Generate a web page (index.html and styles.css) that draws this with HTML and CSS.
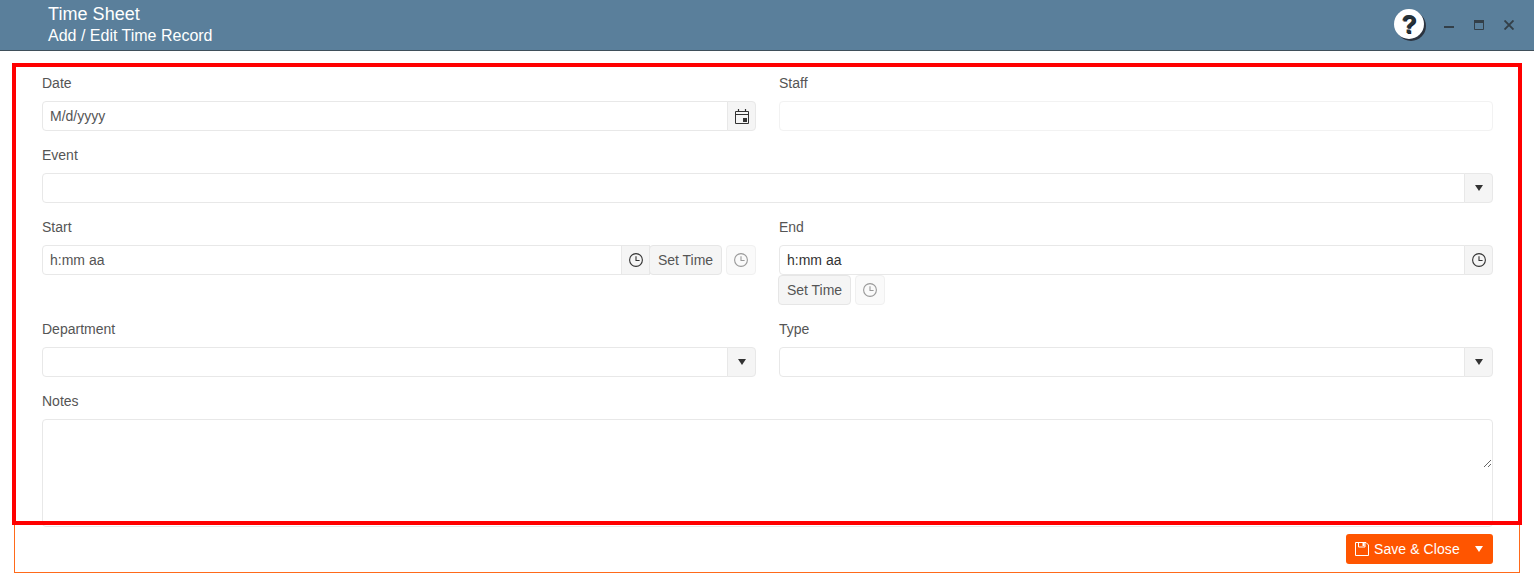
FILE: index.html
```html
<!DOCTYPE html>
<html lang="en">
<head>
<meta charset="utf-8">
<title>Time Sheet</title>
<link rel="stylesheet" href="styles.css">
</head>
<body>
<svg class="defs" width="0" height="0" aria-hidden="true">
  <symbol id="clock" viewBox="0 0 14 14">
    <circle cx="7" cy="7" r="6.4" fill="none" stroke="currentColor" stroke-width="1.1"/>
    <path d="M7 3.2V7.5H10.6" fill="none" stroke="currentColor" stroke-width="1.1"/>
  </symbol>
</svg>
<header class="titlebar">
  <div class="titles">
    <div class="title">Time Sheet</div>
    <div class="subtitle">Add / Edit Time Record</div>
  </div>
  <div class="controls">
    <span class="help">?</span>
    <svg class="ctl" viewBox="0 0 10 10"><path d="M0 7H10" stroke="currentColor" stroke-width="2"/></svg>
    <svg class="ctl" viewBox="0 0 10 10"><path d="M.5 .5H9.5V9.5H.5Z" fill="none" stroke="currentColor"/><path d="M0 1.5H10" stroke="currentColor" stroke-width="3"/></svg>
    <svg class="ctl" viewBox="0 0 10 10"><path d="M.5 .5L9.5 9.5M9.5 .5L.5 9.5" stroke="currentColor" stroke-width="1.9"/></svg>
  </div>
</header>

<main class="frame">
  <form class="form">
    <div class="field">
      <label class="label">Date</label>
      <div class="group">
        <div class="input">M/d/yyyy</div>
        <span class="addon"><svg class="icon-cal" viewBox="0 0 14 15"><path d="M.5 2.5H13.5V14.5H.5Z" fill="none" stroke="currentColor"/><path d="M.5 5.5H13.5" stroke="currentColor"/><path d="M3.5 0V3M10.5 0V3" stroke="currentColor" stroke-width="1.2"/><rect x="8" y="9" width="4" height="4" fill="currentColor"/></svg></span>
      </div>
    </div>
    <div class="field">
      <label class="label">Staff</label>
      <div class="input input-faint"></div>
    </div>
    <div class="field wide">
      <label class="label">Event</label>
      <div class="group">
        <div class="input"></div>
        <span class="addon"><span class="caret"></span></span>
      </div>
    </div>
    <div class="field">
      <label class="label">Start</label>
      <div class="group">
        <div class="input">h:mm aa</div>
        <span class="addon"><svg class="icon"><use href="#clock"/></svg></span>
        <button type="button" class="btn btn-set btn-overlap">Set Time</button>
        <button type="button" class="btn btn-ghost"><svg class="icon"><use href="#clock"/></svg></button>
      </div>
    </div>
    <div class="field">
      <label class="label">End</label>
      <div class="group group-wrap">
        <div class="group-line">
          <div class="input input-dark">h:mm aa</div>
          <span class="addon"><svg class="icon"><use href="#clock"/></svg></span>
        </div>
        <button type="button" class="btn btn-set btn-outdent">Set Time</button>
        <button type="button" class="btn btn-ghost"><svg class="icon"><use href="#clock"/></svg></button>
      </div>
    </div>
    <div class="field">
      <label class="label">Department</label>
      <div class="group">
        <div class="input"></div>
        <span class="addon"><span class="caret"></span></span>
      </div>
    </div>
    <div class="field">
      <label class="label">Type</label>
      <div class="group">
        <div class="input"></div>
        <span class="addon"><span class="caret"></span></span>
      </div>
    </div>
    <div class="field wide">
      <label class="label">Notes</label>
      <div class="notes"><textarea class="notes-area"></textarea></div>
    </div>
  </form>
  <footer class="footer">
    <div class="save">
      <svg class="save-icon" viewBox="0 0 14 14"><path d="M.5 .5H11L13.5 3V13.5H.5Z" fill="none" stroke="currentColor"/><path d="M3.5 .5V5H10V.5" fill="none" stroke="currentColor"/><rect x="7.5" y="1" width="2" height="3" fill="currentColor"/></svg>
      <span class="save-text">Save &amp; Close</span>
      <span class="save-caret"></span>
    </div>
  </footer>
</main>
<div class="highlight"></div>
</body>
</html>
```
FILE: styles.css
```css
* { box-sizing: border-box; }
html, body { margin: 0; padding: 0; background: #fff; }
body { font-family: "Liberation Sans", Arial, sans-serif; font-size: 14px; color: #555; height: 587px; overflow: hidden; position: relative; }
.defs { position: absolute; }

.titlebar { height: 51px; background: #5a7f9b; border-bottom: 1px solid #3f4f5a; padding: 4px 19px 0 48px; display: flex; justify-content: space-between; }
.title { font-size: 18px; line-height: 21px; color: #fff; letter-spacing: .05px; }
.subtitle { font-size: 16px; line-height: 21px; color: #fff; }
.controls { display: flex; align-items: flex-start; color: #333f48; padding-top: 5px; margin-right: 1px; }
.help { width: 30px; height: 30px; border-radius: 50%; background: #fff; color: #263238; font-size: 25px; font-weight: bold; line-height: 30px; text-align: center; box-shadow: 2px 2px 0 #2c3440; text-shadow: 1px 1px 0 #1b2430; }
.ctl { width: 10px; height: 10px; margin: 11px 0 0 20px; }

.frame { margin: 14px 14px 0; width: 1506px; height: 508px; border: 1px solid #ff6a1a; padding: 7px 26px 0 27px; }
.form { display: grid; grid-template-columns: 714px 714px; column-gap: 23px; row-gap: 14px; align-items: start; }
.field { min-width: 0; }
.wide { grid-column: 1 / -1; }
.label { display: block; line-height: 20px; margin-bottom: 8px; color: #555; }

.group { display: flex; }
.group-wrap { flex-wrap: wrap; }
.group-line { display: flex; width: 100%; }
.input { flex: 1; min-width: 0; height: 30px; line-height: 28px; padding: 0 7px; border: 1px solid #e8e8e8; border-radius: 4px 0 0 4px; background: #fff; color: #555; }
.input-faint { border-color: #f2f2f2; border-radius: 4px; }
.input-dark { color: #333; }
.addon { flex: none; width: 29px; height: 30px; margin-left: -1px; display: flex; align-items: center; justify-content: center; background: #f5f5f5; border: 1px solid #e8e8e8; border-radius: 0 4px 4px 0; color: #333; }
.group .addon:not(:last-child) { border-radius: 0; }
.icon { width: 14px; height: 14px; display: block; }
.icon-cal { width: 14px; height: 15px; display: block; }
.caret { width: 0; height: 0; border-left: 4px solid transparent; border-right: 4px solid transparent; border-top: 6px solid #333; }

.btn { font: inherit; height: 30px; padding: 0; border-radius: 4px; display: flex; align-items: center; justify-content: center; }
.btn-set { width: 73px; background: #f5f5f5; border: 1px solid #e6e6e6; color: #555; }
.btn-overlap { margin-left: -1px; position: relative; }
.btn-outdent { margin-left: -1px; }
.btn-ghost { width: 30px; margin-left: 4px; background: #fafafa; border: 1px solid #f0f0f0; color: #999; }

.notes { height: 108px; border: 1px solid #e8e8e8; border-radius: 4px; }
.notes-area { display: block; width: 100%; height: 48px; border: 0; padding: 0; margin: 0; outline: 0; background: transparent; font: inherit; }

.footer { display: flex; justify-content: flex-end; padding-top: 7px; }
.save { width: 147px; height: 30px; background: #ff5500; border-radius: 3px; color: #fff; display: flex; align-items: center; padding-left: 9px; }
.save-icon { width: 14px; height: 14px; flex: none; }
.save-text { margin-left: 5px; letter-spacing: .08px; }
.save-caret { margin-left: 15px; width: 0; height: 0; border-left: 4px solid transparent; border-right: 4px solid transparent; border-top: 6px solid #fff; }

.highlight { position: absolute; left: 12px; top: 63px; width: 1510px; height: 462px; border: 4px solid #ff0000; pointer-events: none; }
```
